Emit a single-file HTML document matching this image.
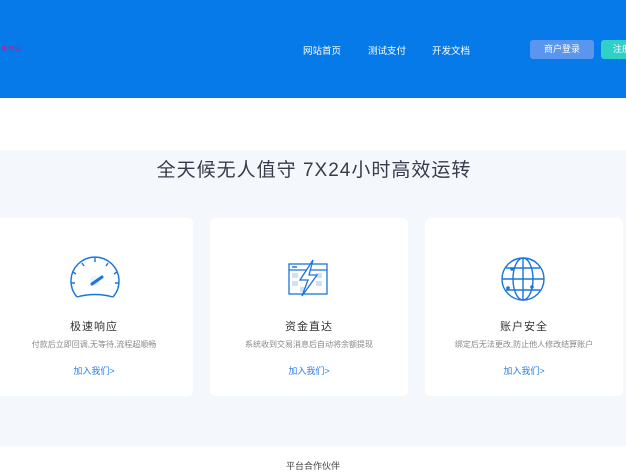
<!DOCTYPE html>
<html><head><meta charset="utf-8"><style>
*{margin:0;padding:0;box-sizing:border-box}
body{width:626px;height:470px;overflow:hidden;font-family:"Liberation Sans","Noto Sans CJK SC",sans-serif;background:#fff;position:relative}
.hd{position:absolute;left:0;top:0;width:626px;height:98px;background:#077aea}
.logo{position:absolute;left:1px;top:44px;font-size:7px;color:#c0208a}
.nav{position:absolute;top:43px;font-size:9.5px;color:#fff}
.btn{position:absolute;top:40px;height:19px;border-radius:3px;font-size:9px;color:#fff;line-height:19px;text-align:center}
.sec{position:absolute;left:0;top:150px;width:626px;height:296px;background:#f4f8fc}
.ttl{position:absolute;top:155px;left:0;width:626px;text-align:center;font-size:19px;color:#3a3a4a;letter-spacing:1px;padding-left:2px}
.card{position:absolute;top:218px;width:198px;height:178px;background:#fff;border-radius:5px;text-align:center}
.card svg{position:absolute;left:74px;top:38px}
.ct{position:absolute;top:100px;width:100%;font-size:11px;color:#333;letter-spacing:1px}
.cd{position:absolute;top:121px;width:100%;font-size:8px;color:#888}
.cl{position:absolute;top:146px;width:100%;font-size:9px;color:#2a7de1}
.ft{position:absolute;top:459px;width:626px;text-align:center;font-size:9px;color:#444}
</style></head><body>
<div class="hd">
<div class="logo">美食网</div>
<div class="nav" style="left:303px">网站首页</div>
<div class="nav" style="left:368px">测试支付</div>
<div class="nav" style="left:432px">开发文档</div>
<div class="btn" style="left:530px;width:64px;background:#5a95ee">商户登录</div>
<div class="btn" style="left:601px;width:40px;background:#2ed0c8;text-align:left;padding-left:12px">注册</div>
</div>
<div class="sec"></div>
<div class="ttl">全天候无人值守 7X24小时高效运转</div>

<div class="card" style="left:-5px">
<svg width="52" height="46" viewBox="0 0 52 46" fill="none" stroke="#1a76d8" stroke-width="1.4">
<path d="M8 41 A24 24 0 1 1 44 41"/><path d="M8 41 Q26 36 44 41"/>
<path d="M26 2v4M13 7l2 3M39 7l-2 3M4 16l3 2M48 16l-3 2M2 27h4M50 27h-4"/>
<circle cx="26" cy="25" r="5" fill="#e8f1fc" stroke="none"/>
<path d="M23 28 L33 21" stroke-width="3" stroke-linecap="round"/>
</svg>
<div class="ct">极速响应</div><div class="cd">付款后立即回调,无等待,流程超顺畅</div><div class="cl">加入我们&gt;</div></div>

<div class="card" style="left:210px">
<svg width="46" height="46" viewBox="0 0 46 46" fill="none" stroke="#1a76d8" stroke-width="1.3">
<rect x="5" y="8" width="38" height="30"/><path d="M5 14h38"/>
<path d="M8 11h5" stroke-width="1.5"/>
<g fill="#cfe1f7" stroke="none"><rect x="8" y="17" width="6" height="5"/><rect x="8" y="25" width="6" height="5"/><rect x="32" y="17" width="6" height="5"/><rect x="32" y="25" width="6" height="5"/><rect x="16" y="31" width="6" height="5"/></g>
<path d="M29 4 L16 24 H24 L18 40 L33 19 H25 Z" fill="#fff"/>
</svg>
<div class="ct">资金直达</div><div class="cd">系统收到交易消息后自动将余额提现</div><div class="cl">加入我们&gt;</div></div>

<div class="card" style="left:425px">
<svg width="48" height="46" viewBox="0 0 48 46" fill="none" stroke="#1a76d8" stroke-width="1.4">
<circle cx="24" cy="23" r="21"/><ellipse cx="24" cy="23" rx="10" ry="21"/>
<path d="M24 2v42M3 23h42M7 12h34M7 34h34"/>
<g fill="#1a76d8" stroke="none"><circle cx="13" cy="13" r="1.8"/><circle cx="9" cy="32" r="1.8"/><circle cx="33" cy="31" r="1.8"/></g>
</svg>
<div class="ct">账户安全</div><div class="cd">绑定后无法更改,防止他人修改结算账户</div><div class="cl">加入我们&gt;</div></div>

<div class="ft">平台合作伙伴</div>
</body></html>
